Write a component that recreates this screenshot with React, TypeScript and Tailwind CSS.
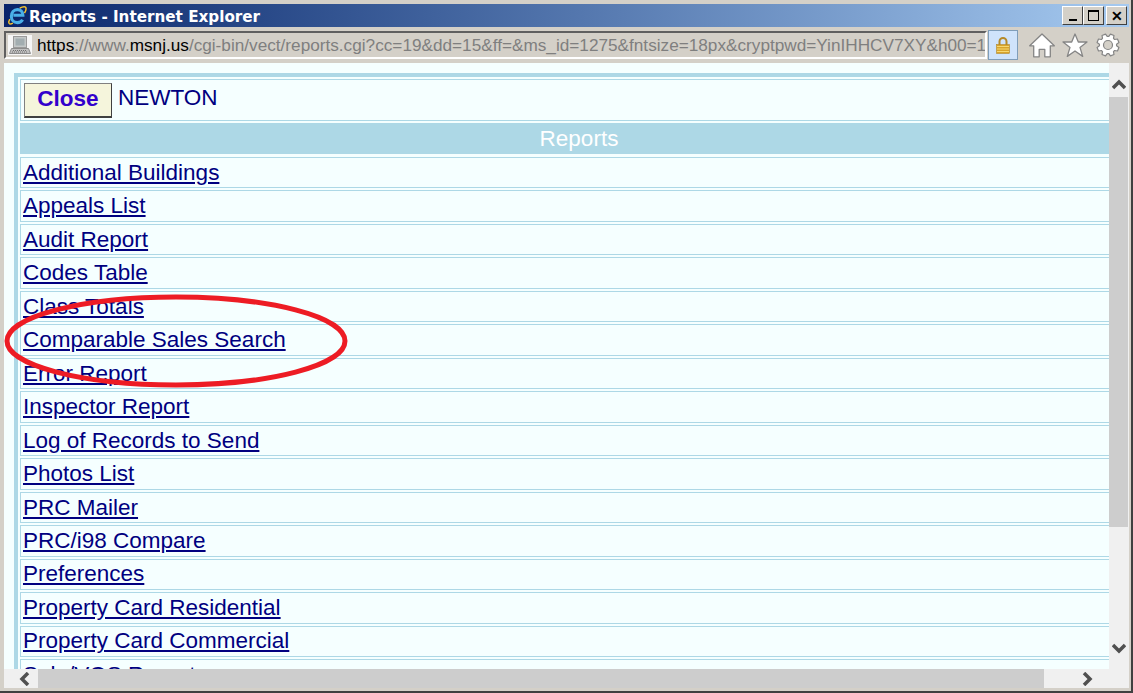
const reports = [
  "Additional Buildings",
  "Appeals List",
  "Audit Report",
  "Codes Table",
  "Class Totals",
  "Comparable Sales Search",
  "Error Report",
  "Inspector Report",
  "Log of Records to Send",
  "Photos List",
  "PRC Mailer",
  "PRC/i98 Compare",
  "Preferences",
  "Property Card Residential",
  "Property Card Commercial",
  "Sale/VOS Report",
];

function IeLogo() {
  return (
    <svg width="20" height="21" viewBox="0 0 22 22" className="shrink-0">
      <path d="M7 10.800h10.500c0-4-2.600-6.300-6-6.300C7.500 4.500 4.800 7.800 4.800 12c0 4.300 2.900 6.800 6.600 6.800 2.700 0 4.600-1.200 5.800-3.200" fill="none" stroke="#4ab0e8" strokeWidth="3.400" />
      <path d="M3 15C1 19 2 22 6.500 19.500M14 3c3.500-2 7-2.500 7 .5 0 1.500-.8 3.200-1.800 5" fill="none" stroke="#f2c230" strokeWidth="1.600" />
    </svg>
  );
}

function PageIcon() {
  return (
    <svg width="24" height="20" viewBox="0 0 24 20" className="shrink-0">
      <rect width="24" height="20" fill="#f6f6f6" />
      <rect x="5.500" y="1.500" width="13" height="11" fill="#c4c8c8" stroke="#9a9a9a" />
      <rect x="7.500" y="3.500" width="9" height="7" fill="#a2adb0" />
      <path d="M3.500 13.500h17l2 5H1.500z" fill="#c0c0c0" stroke="#8c8c8c" />
      <path d="M5 15.500h14M4 17h16" stroke="#6f6f6f" strokeDasharray="1 1" />
    </svg>
  );
}

function LockIcon() {
  return (
    <svg width="14" height="17" viewBox="0 0 14 17">
      <path d="M3.500 8V4.500a3.500 3.500 0 0 1 7 0V8" fill="none" stroke="#b58a2a" strokeWidth="2" />
      <rect x="0.500" y="7.500" width="13" height="9" fill="#d9a42a" stroke="#a9801f" strokeWidth="0.500" />
      <path d="M1 9.500h12M1 12h12M1 14.500h12" stroke="#f5d873" />
    </svg>
  );
}

function gearPoints() {
  const pts: string[] = [];
  for (let i = 0; i < 8; i++) {
    const a = (i * Math.PI) / 4 + Math.PI / 8;
    [
      [-0.3, 8.6],
      [-0.17, 11.2],
      [0.17, 11.2],
      [0.3, 8.6],
    ].forEach(([da, r]) => {
      pts.push(`${(12 + r * Math.cos(a + da)).toFixed(2)},${(12 + r * Math.sin(a + da)).toFixed(2)}`);
    });
  }
  return pts.join(" ");
}

function ToolIcons() {
  return (
    <div className="flex items-center ml-[11px]">
      <svg width="26" height="25" viewBox="0 0 26 25">
        <path d="M13 1 25.300 12.800h-4v11H15.800v-7.500h-5.600v7.500H4.700v-11h-4z" fill="#fff" stroke="#858585" strokeWidth="1.300" strokeLinejoin="round" />
      </svg>
      <svg width="26" height="25" viewBox="0 0 26 25" className="ml-[7px]">
        <path d="m13 1 3.300 8h8.700l-7 5.400 2.700 9-7.700-5.400L5.300 23.400 8 14.400 1 9h8.700z" fill="#fff" stroke="#858585" strokeWidth="1.300" strokeLinejoin="round" />
      </svg>
      <svg width="24" height="24" viewBox="0 0 24 24" className="ml-[8px]">
        <polygon points={gearPoints()} fill="#fff" stroke="#858585" strokeWidth="1.200" strokeLinejoin="round" />
        <circle cx="12" cy="12" r="4.500" fill="#d4d0c8" stroke="#858585" strokeWidth="1.200" />
      </svg>
    </div>
  );
}

function WinButton({ children, className }: { children: React.ReactNode; className?: string }) {
  return (
    <div
      className={`w-[21px] h-[19px] bg-[#d4d0c8] border border-t-white border-l-white border-r-[#404040] border-b-[#404040] flex items-center justify-center ${className ?? ""}`}
    >
      {children}
    </div>
  );
}

function Arrow({ d }: { d: string }) {
  return (
    <svg width="14" height="14" viewBox="0 0 14 14">
      <path d={d} fill="none" stroke="#505050" strokeWidth="3.500" />
    </svg>
  );
}

export default function App() {
  return (
    <div className="w-[1133px] h-[693px] overflow-hidden flex flex-col bg-[#d4d0c8] border-r-2 border-b-2 border-[#404040] pl-[4px] pt-[4px] pr-[2px] pb-[3px] font-['Liberation_Sans',Arial,sans-serif] relative">
      <div className="h-[23px] shrink-0 flex items-center pl-[3px] pr-[2px] bg-gradient-to-r from-[#0a246a] to-[#a6caf0]">
        <IeLogo />
        <span className="ml-[2px] pt-[3px] text-white font-bold text-[15.2px] font-['DejaVu_Sans',sans-serif]">
          Reports - Internet Explorer
        </span>
        <div className="ml-auto flex items-center">
          <WinButton>
            <div className="w-[8px] h-[2px] bg-black mt-[8px]" />
          </WinButton>
          <WinButton>
            <div className="w-[11px] h-[11px] border border-black border-t-2" />
          </WinButton>
          <WinButton className="ml-[2px]">
            <span className="text-black font-bold text-[14px] leading-none">✕</span>
          </WinButton>
        </div>
      </div>

      <div className="h-[36px] shrink-0 flex items-center">
        <div className="w-[983px] h-[28px] flex items-center border-2 border-t-[#606060] border-l-[#606060] border-r-white border-b-white pl-[2px] overflow-hidden">
          <PageIcon />
          <span className="ml-[5px] pt-[2px] whitespace-nowrap text-[17.2px] text-[#7f7f7f]">
            <span className="text-black">https</span>://www.<span className="text-black">msnj.us</span>
            /cgi-bin/vect/reports.cgi?cc=19&amp;dd=15&amp;ff=&amp;ms_id=1275&amp;fntsize=18px&amp;cryptpwd=YinIHHCV7XY&amp;h00=1
          </span>
        </div>
        <div className="ml-[1px] w-[30px] h-[30px] bg-[#cfe3fb] border border-[#7f9db9] flex items-center justify-center shrink-0">
          <LockIcon />
        </div>
        <ToolIcons />
      </div>

      <div className="flex-1 min-h-0 flex">
        <div className="flex-1 min-w-0 bg-[#f5ffff] overflow-hidden pl-[10px] pt-[10px]">
          <div className="border-l-[4px] border-t-[4px] border-[#add8e6] pl-[2px] pt-[2px]">
            <div className="h-[42px] border border-[#add8e6] border-r-0 flex items-start pl-[3px] pt-[3px] gap-[6px]">
              <div className="w-[88px] h-[35px] pb-[3px] bg-[#f5f5dc] border border-t-[#808080] border-l-[#808080] border-r-[#404040] border-b-[#404040] border-b-2 flex items-center justify-center text-[22.5px] font-bold text-[#3300cc]">
                Close
              </div>
              <span className="mt-[2px] text-[22.5px] leading-[26px] text-[#000080]">NEWTON</span>
            </div>
            <div className="h-[31px] mt-[2px] mb-[3px] pl-[29px] bg-[#add8e6] flex items-center justify-center text-white text-[22.5px]">
              Reports
            </div>
            {reports.map((name) => (
              <div key={name} className="h-[31.47px] mb-[2px] border border-[#add8e6] border-r-0 flex items-center pl-[2px]">
                <a className="text-[22.5px] text-[#000080] underline whitespace-nowrap">{name}</a>
              </div>
            ))}
          </div>
        </div>
        <div className="w-[20px] shrink-0 bg-[#f0f0f0] flex flex-col">
          <div className="h-[34px] pt-[15px] flex justify-center shrink-0">
            <Arrow d="M1 10l6-6 6 6" />
          </div>
          <div className="w-[19px] h-[430px] bg-[#cdcdcd]" />
          <div className="mt-auto h-[28px] flex items-start justify-center">
            <Arrow d="M1 4l6 6 6-6" />
          </div>
        </div>
      </div>

      <div className="h-[19px] shrink-0 bg-[#f0f0f0] flex items-center">
        <div className="w-[34px] pl-[14px] flex">
          <Arrow d="M10 1 4 7l6 6" />
        </div>
        <div className="w-[1006px] h-full bg-[#cdcdcd]" />
        <div className="ml-auto mr-[35px] flex">
          <Arrow d="M4 1l6 6-6 6" />
        </div>
      </div>

      <svg className="absolute left-0 top-0 pointer-events-none" width="360" height="400" viewBox="0 0 360 400">
        <ellipse cx="176" cy="341" rx="169" ry="44" fill="none" stroke="#ed1c24" strokeWidth="5" />
      </svg>
    </div>
  );
}
